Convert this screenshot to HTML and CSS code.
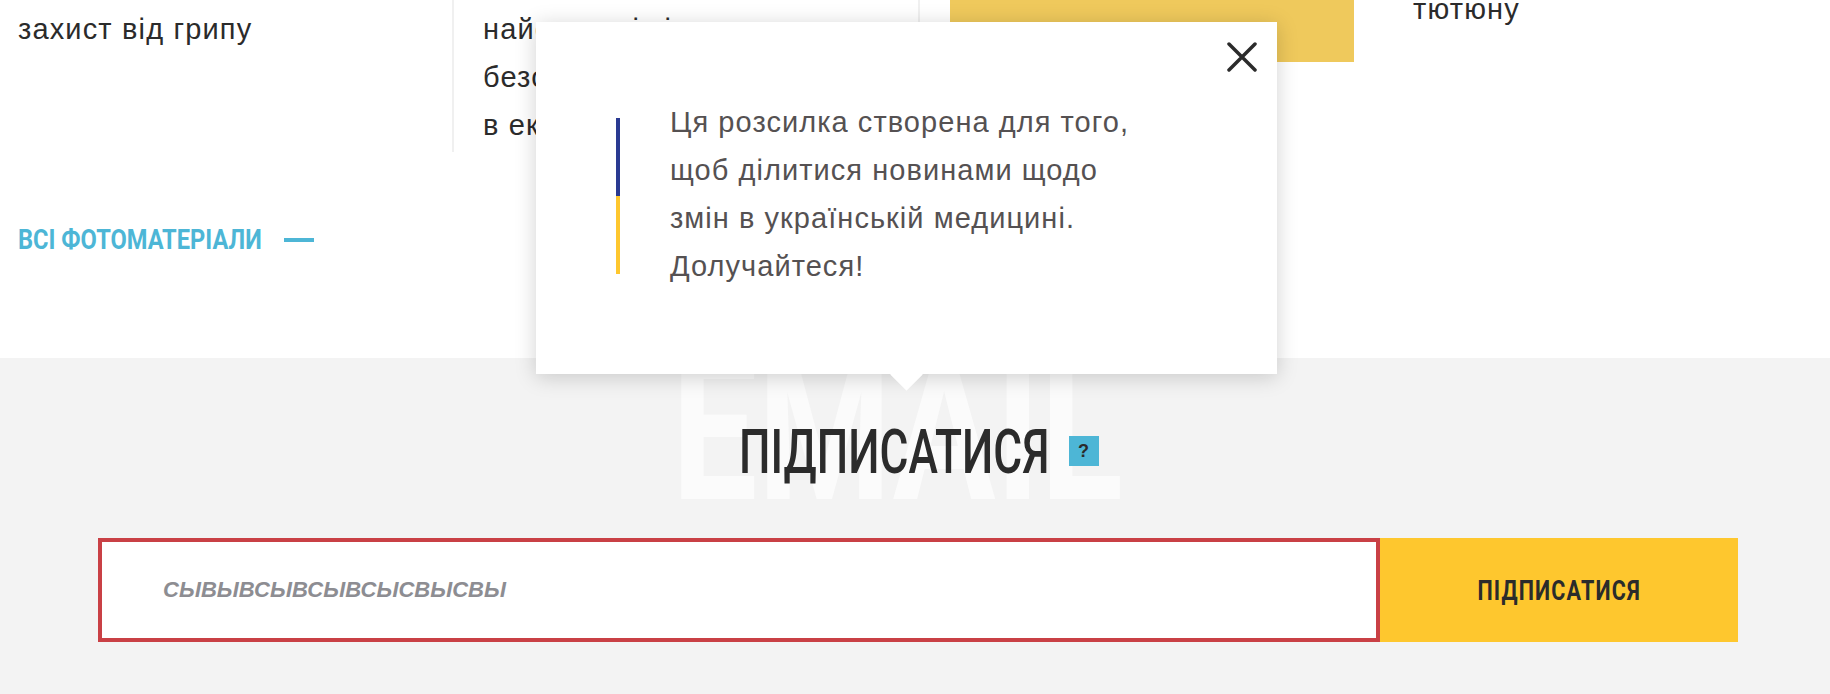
FILE: index.html
```html
<!DOCTYPE html>
<html lang="uk">
<head>
    <meta charset="UTF-8">
    <title>Підписатися</title>
    <link rel="stylesheet" href="styles.css">
</head>
<body>
    <section class="news">
        <div class="news-row">
            <div class="news-col">
                <p>захист від грипу</p>
            </div>
            <div class="news-col news-col-lined">
                <p>найсучасніші<br>безоплатні<br>в екології</p>
            </div>
            <div class="news-col news-col-photo">
                <div class="news-photo"></div>
            </div>
            <div class="news-col news-col-last">
                <p>тютюну</p>
            </div>
        </div>
        <a class="more-link" href="#">
            <span class="more-text">ВСІ ФОТОМАТЕРІАЛИ</span>
            <i class="more-dash"></i>
        </a>
    </section>

    <section class="subscribe">
        <div class="subscribe-bg"><span>EMAIL</span></div>
        <div class="subscribe-head">
            <h2><span>ПІДПИСАТИСЯ</span></h2>
            <span class="help-badge">?</span>
        </div>
        <form class="subscribe-form">
            <input class="subscribe-input" type="text" value="сывывсывсывсысвысвы">
            <button class="subscribe-btn" type="button"><span>ПІДПИСАТИСЯ</span></button>
        </form>
    </section>

    <div class="popup">
        <button class="popup-close" type="button" aria-label="Закрити">
            <svg width="30" height="30" viewBox="0 0 30 30">
                <path d="M2 2L28 28M28 2L2 28" stroke="#2b2b2b" stroke-width="3.5" stroke-linecap="round" fill="none"/>
            </svg>
        </button>
        <div class="popup-body">
            <div class="popup-bar"></div>
            <p>Ця розсилка створена для того,<br>щоб ділитися новинами щодо<br>змін в українській медицині.<br>Долучайтеся!</p>
        </div>
    </div>
</body>
</html>
```

FILE: styles.css
```css
* {
    box-sizing: border-box;
}
html, body {
    height: 100%;
}
body {
    margin: 0;
    background-color: #f3f3f3;
    color: #2b2b2b;
    font-family: 'Liberation Sans', Arial, sans-serif;
    overflow: hidden;
    position: relative;
}
p {
    margin: 0;
}

/* top part, page is scrolled so the row starts above the fold */
.news {
    height: 358px;
    background-color: #fff;
    overflow: hidden;
    padding-left: 18px;
}
.news-row {
    display: grid;
    grid-template-columns: 434px 468px 434px 1fr;
    height: 152px;
    font-size: 29px;
    line-height: 48px;
    letter-spacing: 1.15px;
}
.news-col-lined {
    border-left: 2px solid #f0f0f0;
    border-right: 2px solid #f0f0f0;
    padding-left: 29px;
    white-space: nowrap;
    overflow: hidden;
}
.news-col-lined p,
.news-col:first-child p {
    padding-top: 5px;
}
.news-col-photo {
    padding-left: 30px;
}
.news-photo {
    height: 62px;
    background-color: #efc95c;
}
.news-col-last {
    padding-left: 59px;
}
.news-col-last p {
    margin-top: -15px;
}
.more-link {
    display: flex;
    align-items: center;
    gap: 23px;
    margin-top: 72px;
    color: #4db6d6;
    font-family: Roboto, 'Liberation Sans', sans-serif;
    font-size: 28px;
    font-weight: bold;
    line-height: 32px;
    text-decoration: none;
}
.more-text {
    width: 243px;
    white-space: nowrap;
    transform: scaleX(0.844);
    transform-origin: left center;
}
.more-dash {
    width: 30px;
    height: 4px;
    background-color: #4db6d6;
}

/* subscribe block */
.subscribe {
    position: relative;
    height: 336px;
    padding: 0 92px 0 98px;
    overflow: hidden;
}
.subscribe-bg {
    position: absolute;
    left: 0;
    top: -27px;
    width: 1794px;
    text-align: center;
    color: #fbfbfb;
    font-family: Roboto, 'Liberation Sans', sans-serif;
    font-size: 200px;
    font-weight: bold;
    line-height: 200px;
}
.subscribe-bg span {
    display: inline-block;
    transform: scaleX(0.765);
}
.subscribe-head {
    position: relative;
    display: flex;
    justify-content: center;
    align-items: center;
    gap: 24px;
    height: 180px;
    padding: 6px 0 0 1px;
}
.subscribe-head h2 {
    width: 306px;
    margin: 0;
    padding-top: 2px;
    font-family: Roboto, 'Liberation Sans', sans-serif;
    font-size: 62px;
    font-weight: 500;
    line-height: 60px;
    white-space: nowrap;
}
.subscribe-head h2 span {
    display: inline-block;
    transform: scaleX(0.715);
    transform-origin: left center;
}
.help-badge {
    width: 30px;
    height: 30px;
    background-color: #4db6d6;
    font-size: 18px;
    font-weight: bold;
    line-height: 30px;
    text-align: center;
}
.subscribe-form {
    position: relative;
    display: flex;
    height: 104px;
}
.subscribe-input {
    flex: 1;
    min-width: 0;
    border: 4px solid #c94045;
    padding: 0 0 0 61px;
    background-color: #fff;
    color: #8d8d92;
    font-family: 'Liberation Sans', Arial, sans-serif;
    font-size: 22px;
    font-style: italic;
    font-weight: bold;
    text-transform: uppercase;
    outline: none;
}
.subscribe-btn {
    width: 358px;
    border: 0;
    background-color: #fec72e;
    color: #2b2b2b;
    font-family: Roboto, 'Liberation Sans', sans-serif;
    font-size: 28px;
    font-weight: bold;
    letter-spacing: 1.5px;
}
.subscribe-btn span {
    display: inline-block;
    transform: scaleX(0.77);
}

/* popup over the subscribe title */
.popup {
    position: absolute;
    left: 536px;
    top: 22px;
    width: 741px;
    height: 352px;
    background-color: #fff;
    box-shadow: 0 3px 20px rgba(0, 0, 0, 0.18);
    padding: 96px 0 0 80px;
}
.popup::after {
    content: '';
    position: absolute;
    left: 359px;
    bottom: -12px;
    width: 23px;
    height: 23px;
    background-color: #fff;
    transform: rotate(45deg);
}
.popup-close {
    position: absolute;
    top: 20px;
    right: 20px;
    width: 30px;
    height: 30px;
    padding: 0;
    border: 0;
    background: none;
}
.popup-body {
    display: flex;
    gap: 50px;
}
.popup-bar {
    width: 4px;
    height: 156px;
    background: linear-gradient(#2a3a92 50%, #fec72e 50%);
}
.popup-body p {
    margin-top: -20px;
    color: #555152;
    font-size: 29px;
    line-height: 48px;
    letter-spacing: 1.05px;
}
```
